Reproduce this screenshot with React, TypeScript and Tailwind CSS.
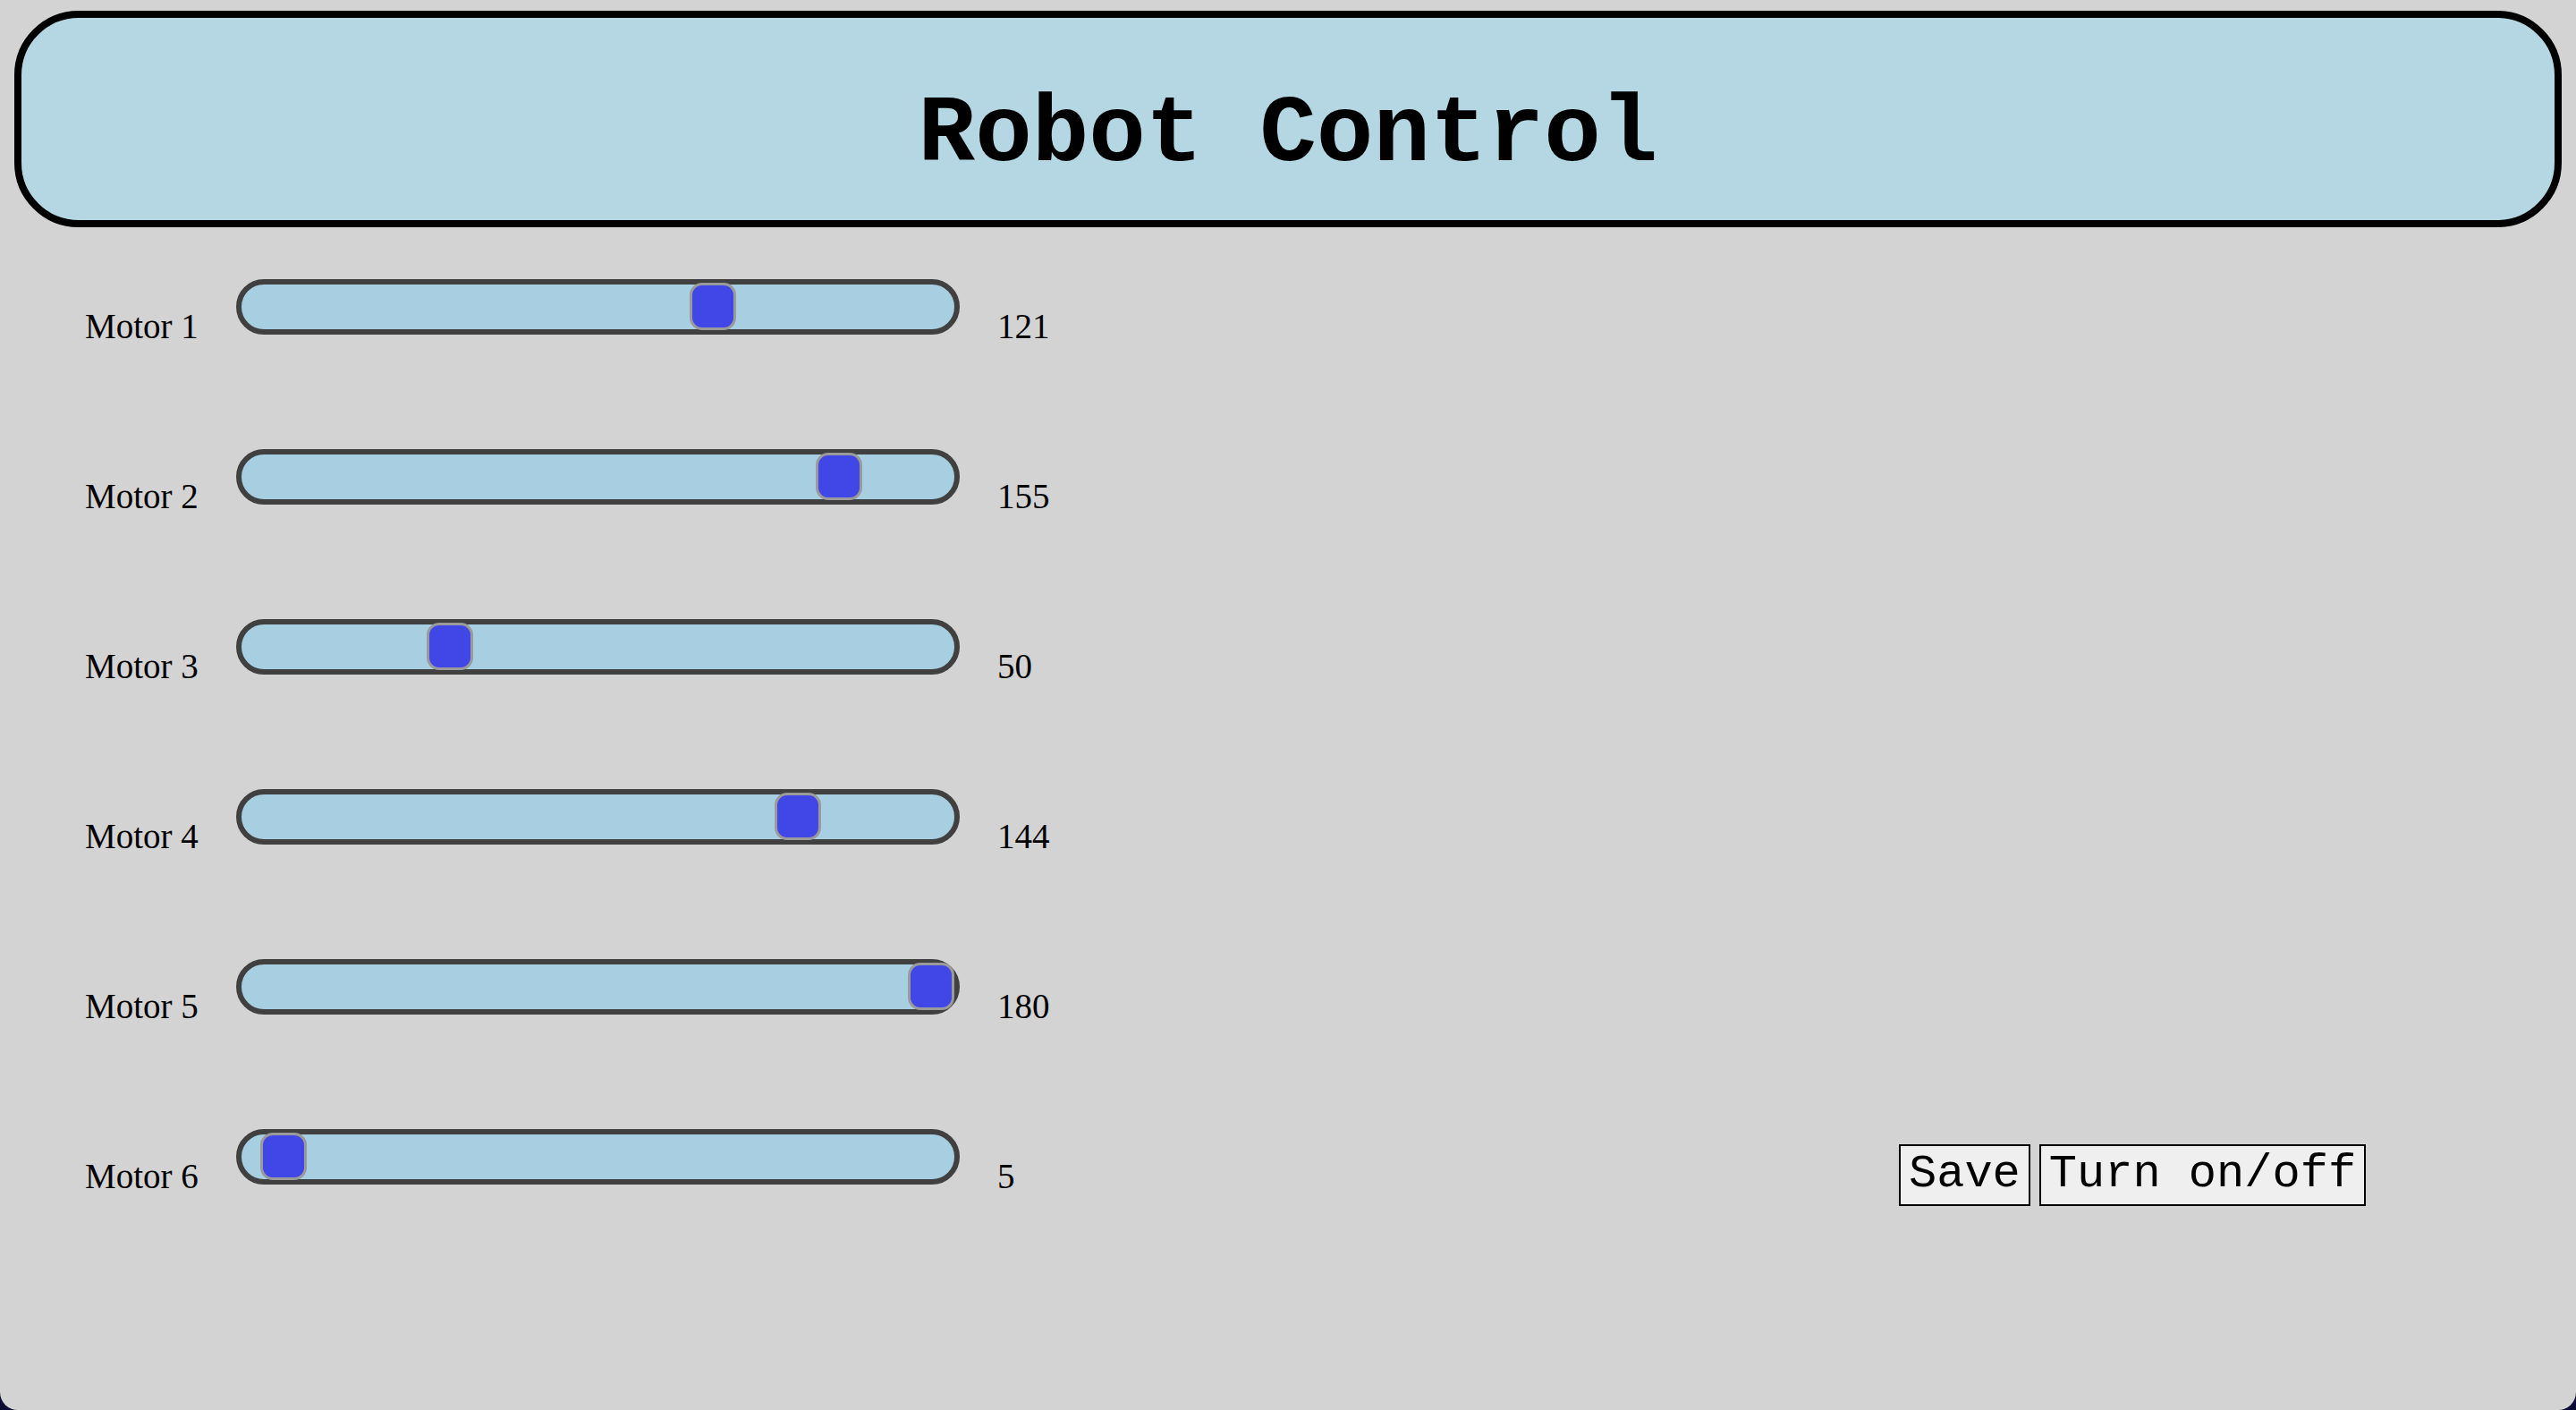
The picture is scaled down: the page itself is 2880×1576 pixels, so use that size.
import { useState } from "react"

type Motor = {
  name: string,
  value: number
}

const MAX = 180

const startMotors: Motor[] = [
  { name: "Motor 1", value: 121 },
  { name: "Motor 2", value: 155 },
  { name: "Motor 3", value: 50 },
  { name: "Motor 4", value: 144 },
  { name: "Motor 5", value: 180 },
  { name: "Motor 6", value: 5 },
]

export default function App() {
  const [motors, setMotors] = useState(startMotors)
  const [on, setOn] = useState(true)

  const setValue = (i: number, v: number) => {
    setMotors(prev => prev.map((m, idx) => idx === i ? { ...m, value: v } : m))
  }

  return (
    <div className="min-h-screen bg-[#0b0b36]">
      <div className="h-[1576px] overflow-hidden rounded-b-[20px] bg-[#d3d3d3] pt-3">
        <header className="mx-4 rounded-[72px] border-8 border-black bg-[#b4d7e3] pt-[78px] pb-[42px]">
          <h1 className="text-center font-['Liberation_Mono','Courier_New',monospace] text-[106px] font-bold leading-none text-black">
            Robot Control
          </h1>
        </header>

        <main className="mt-[58px] flex">
          <div className="flex flex-col gap-[128px] pl-[95px] pb-[24px]">
            {motors.map((m, i) => (
              <MotorRow key={m.name} motor={m} onChange={(v) => setValue(i, v)} />
            ))}
          </div>

          <div className="flex items-end gap-[10px] pl-[928px]">
            <button
              className="border-2 border-black bg-[#efefef] px-[9px] py-[3px] font-['Liberation_Mono','Courier_New',monospace] text-[52px] leading-[1.133] text-black"
              onClick={() => console.log(motors)}>Save</button>
            <button
              className="border-2 border-black bg-[#efefef] px-[9px] py-[3px] font-['Liberation_Mono','Courier_New',monospace] text-[52px] leading-[1.133] text-black"
              onClick={() => setOn(prev => !prev)}
              aria-pressed={on}>Turn on/off</button>
          </div>
        </main>
      </div>
    </div>
  )
}

function MotorRow({ motor, onChange }: { motor: Motor, onChange: (v: number) => void }) {
  // inner track is 797px, thumb is 52px wide
  const left = (motor.value / MAX) * (797 - 52)

  const pick = (e: React.PointerEvent<HTMLDivElement>) => {
    const rect = e.currentTarget.getBoundingClientRect()
    const x = e.clientX - rect.left - 6 - 26
    const v = Math.round(Math.min(Math.max(x / (797 - 52), 0), 1) * MAX)
    onChange(v)
  }

  return (
    <div className="flex h-[62px] items-start">
      <span className="mt-[33px] w-[127px] whitespace-nowrap font-['Liberation_Serif','Times_New_Roman',serif] text-[39px] leading-none text-black">
        {motor.name}
      </span>

      <div
        className="relative ml-[42px] h-[62px] w-[809px] cursor-pointer rounded-full border-[6px] border-[#404040] bg-[#a8cee1]"
        onPointerDown={pick}>
        <div
          className="absolute -top-[2px] h-[53px] w-[52px] rounded-[14px] border-[3px] border-[#9a9a9a] bg-[#4147e6]"
          style={{ left }} />
      </div>

      <span className="ml-[42px] mt-[33px] w-[80px] font-['Liberation_Serif','Times_New_Roman',serif] text-[39px] leading-none text-black">
        {motor.value}
      </span>
    </div>
  )
}
